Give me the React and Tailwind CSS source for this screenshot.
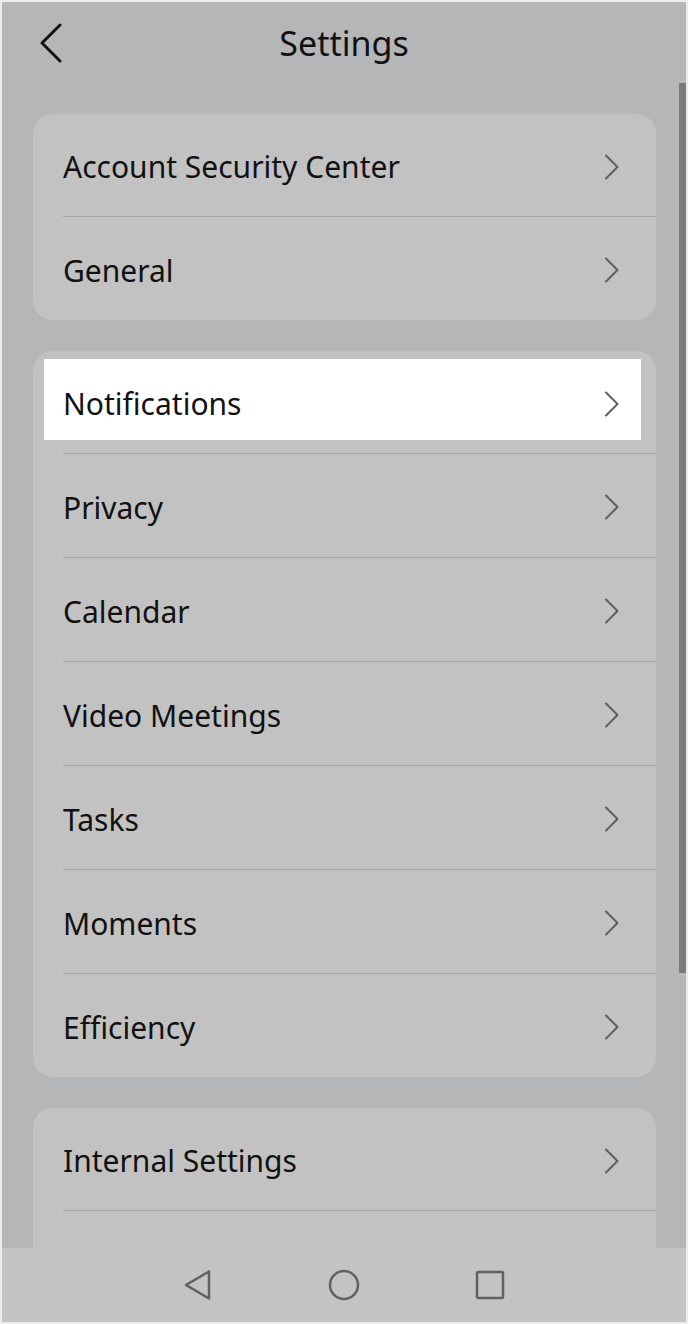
import { useState } from 'react';

const groups = [
  ['Account Security Center', 'General'],
  ['Notifications', 'Privacy', 'Calendar', 'Video Meetings', 'Tasks', 'Moments', 'Efficiency'],
  ['Internal Settings', ''],
];

function Chevron() {
  return (
    <svg width="16" height="26" viewBox="0 0 16 26" fill="none" className="shrink-0">
      <path d="M2 1.5 L13.5 13 L2 24.5" stroke="#5b5e63" strokeWidth="2" strokeLinecap="round" strokeLinejoin="round" />
    </svg>
  );
}

function Row({ label, first, last, highlighted }) {
  return (
    <div className="relative">
      {highlighted && <div className="absolute left-[11px] top-[8px] w-[597px] h-[81px] bg-white" />}
      <div
        className={`relative flex items-center justify-between pl-[30px] pr-[36px] pt-[3px] ${
          first ? 'h-[102px]' : 'h-[103px]'
        }`}
      >
        <span className="text-[30px] text-[#111]">{label}</span>
        {label && <Chevron />}
      </div>
      {!last && <div className="ml-[30px] h-px bg-[#a4a4a4]" />}
    </div>
  );
}

export default function App() {
  const [active] = useState('Notifications');

  return (
    <div
      className="relative w-[688px] h-[1324px] overflow-hidden border-2 border-[#ececec] bg-[#b5b6b8] flex flex-col"
      style={{ fontFamily: '"Noto Sans", Roboto, sans-serif' }}
    >
      {/* Header */}
      <div className="relative h-[84px] shrink-0 flex items-center justify-center">
        <button className="absolute left-[37px] top-[21px]">
          <svg width="24" height="40" viewBox="0 0 24 40" fill="none">
            <path d="M21 2 L3 20 L21 38" stroke="#111" strokeWidth="3" strokeLinecap="round" strokeLinejoin="round" />
          </svg>
        </button>
        <h1 className="text-[34px] text-[#111] -mt-[1px]">Settings</h1>
      </div>

      {/* List */}
      <div className="flex-1 overflow-hidden pt-[28px] pl-[31px] pr-[30px] flex flex-col gap-[31px]">
        {groups.map((items, gi) => (
          <div key={gi} className="bg-[#c2c2c2] rounded-[20px] shrink-0">
            {items.map((label, i) => (
              <Row
                key={i}
                label={label}
                first={i === 0}
                last={i === items.length - 1}
                highlighted={label === active}
              />
            ))}
          </div>
        ))}
      </div>

      {/* Scrollbar */}
      <div className="absolute right-0 top-[81px] w-[7px] h-[890px] bg-[#7b7b7b]" />

      {/* Nav bar */}
      <div className="h-[74px] shrink-0 bg-[#c3c3c3] flex items-center justify-center gap-[115px]">
        <svg width="30" height="32" viewBox="0 0 30 32" fill="none">
          <path d="M26 2.5 L26 29.5 L3 16 Z" stroke="#5f6064" strokeWidth="2.5" strokeLinejoin="round" />
        </svg>
        <svg width="32" height="32" viewBox="0 0 32 32" fill="none">
          <circle cx="16" cy="16" r="14" stroke="#5f6064" strokeWidth="2.5" />
        </svg>
        <svg width="30" height="30" viewBox="0 0 30 30" fill="none">
          <rect x="2" y="2" width="26" height="26" rx="1.5" stroke="#5f6064" strokeWidth="2.5" />
        </svg>
      </div>
    </div>
  );
}
